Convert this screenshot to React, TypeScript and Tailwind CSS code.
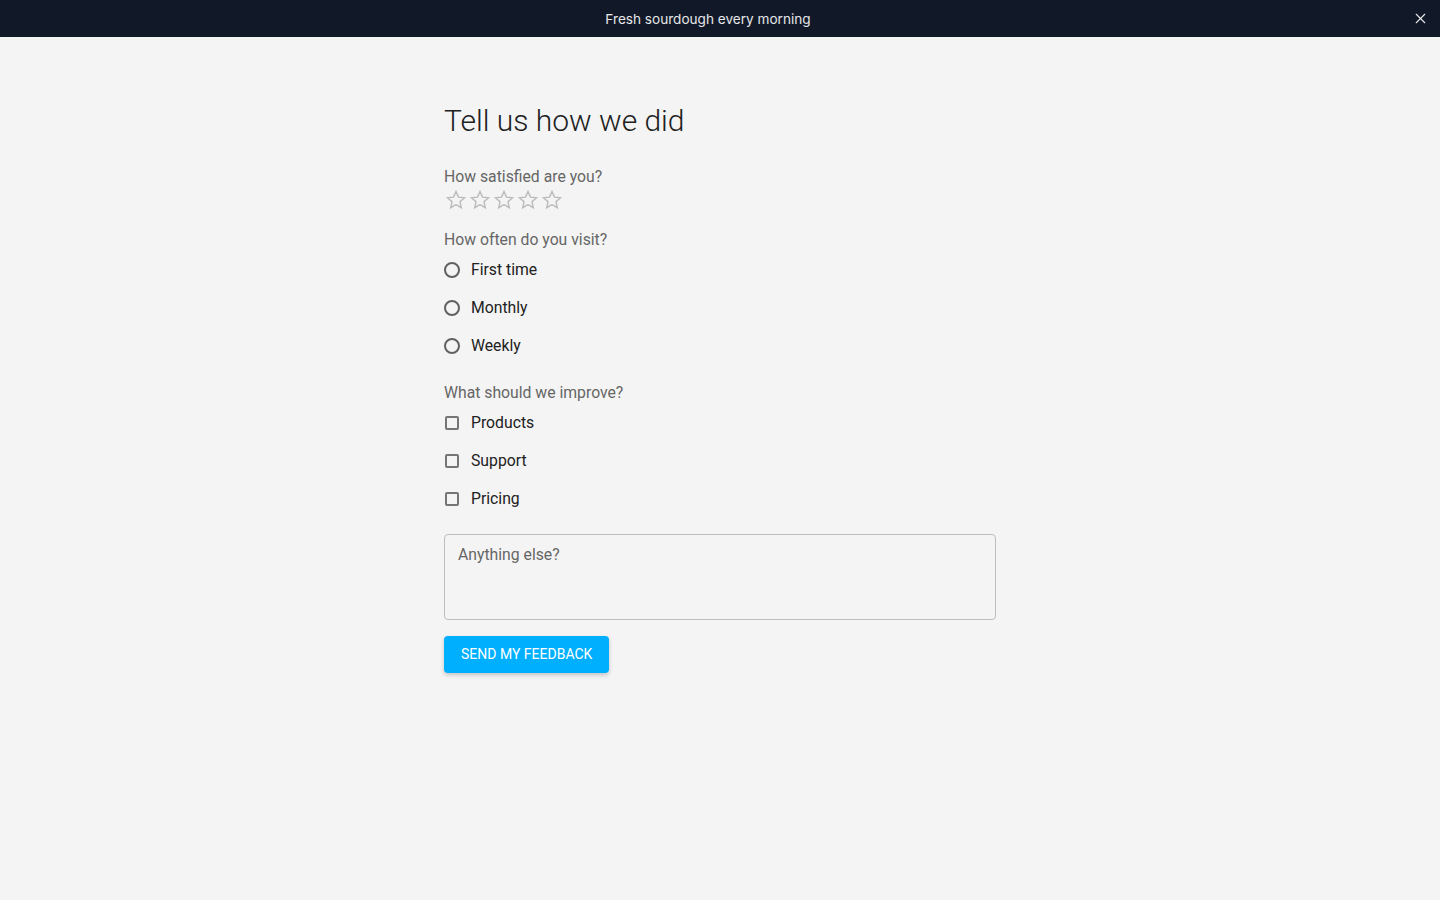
import { X } from "lucide-react";

const Star = () => (
  <svg width="24" height="24" viewBox="0 0 24 24" className="block">
    <path
      d="M12 3.6l2.47 5.53 6.03.6-4.54 4.02 1.3 5.92L12 16.6l-5.26 3.07 1.3-5.92L3.5 9.73l6.03-.6z"
      fill="none"
      stroke="#bdbdbd"
      strokeWidth="1.5"
      strokeLinejoin="miter"
    />
  </svg>
);

const visits = ["First time", "Monthly", "Weekly"];
const improve = ["Products", "Support", "Pricing"];

export default function App() {
  return (
    <div className="min-h-screen bg-[#f4f4f4] font-['Roboto',sans-serif]">
      {/* Banner */}
      <div className="relative h-[37px] bg-[#111827] flex items-center">
        <span className="flex-1 text-center pr-[24px] pt-[2px] font-['Inter',sans-serif] text-[13.6px] text-white/90">
          Fresh sourdough every morning
        </span>
        <button className="absolute right-[11px] top-[10px] text-white/90" aria-label="Close">
          <X className="w-[17px] h-[17px]" strokeWidth={1.6} />
        </button>
      </div>

      {/* Form */}
      <div className="mx-auto w-[552px] pt-[65px]">
        <h1 className="text-[30px] leading-[38px] text-[#212121] font-light">
          Tell us how we did
        </h1>

        <div className="mt-[25px] text-[15.75px] leading-[24px] text-[#666]">How satisfied are you?</div>
        <div className="flex -mt-[1px]">
          {[0, 1, 2, 3, 4].map((i) => (
            <Star key={i} />
          ))}
        </div>

        <div className="mt-[16px] text-[15.75px] leading-[24px] text-[#666]">How often do you visit?</div>
        <div className="flex flex-col -mt-[1px]">
          {visits.map((v) => (
            <label key={v} className="flex items-center h-[38px]">
              <span className="w-[16px] h-[16px] rounded-full border-2 border-[#616161]" />
              <span className="ml-[11px] text-[15.75px] text-[#212121]">{v}</span>
            </label>
          ))}
        </div>

        <div className="mt-[16px] text-[15.75px] leading-[24px] text-[#666]">What should we improve?</div>
        <div className="flex flex-col -mt-[1px]">
          {improve.map((v) => (
            <label key={v} className="flex items-center h-[38px]">
              <span className="ml-[1px] w-[14px] h-[14px] rounded-[2px] border-2 border-[#757575]" />
              <span className="ml-[12px] text-[15.75px] text-[#212121]">{v}</span>
            </label>
          ))}
        </div>

        <textarea
          placeholder="Anything else?"
          className="mt-[16px] block w-full h-[86px] resize-none rounded-[4px] border border-[#bdbdbd] bg-transparent px-[13px] py-[8px] text-[15.75px] leading-[24px] text-[#212121] placeholder:text-[#666] outline-none"
        />

        <button className="mt-[16px] h-[37px] px-[17px] rounded-[4px] bg-[#00b0ff] text-white text-[14px] font-normal uppercase shadow-[0_2px_4px_rgba(0,0,0,0.2)]">
          Send my feedback
        </button>
      </div>
    </div>
  );
}
